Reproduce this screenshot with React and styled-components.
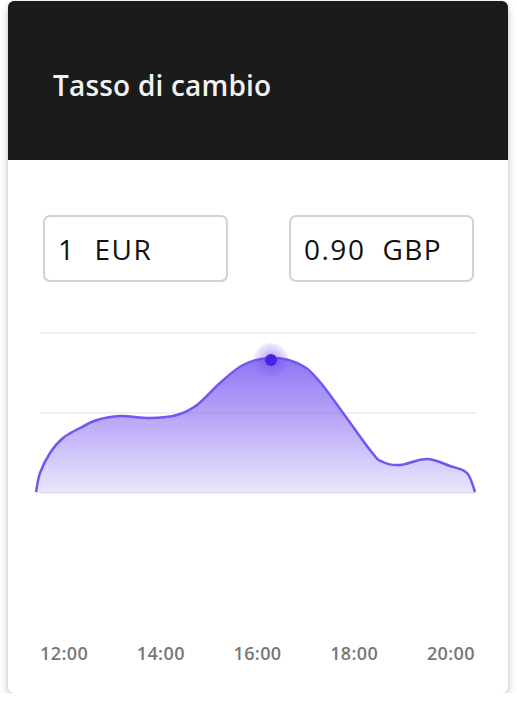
import styled, { createGlobalStyle } from "styled-components"

const GlobalStyle = createGlobalStyle`
  body {
    margin: 0;
    background: #ffffff;
    font-family: "Open Sans", "Liberation Sans", sans-serif;
  }
`

const points = [
  [6, 172], [10, 153], [20, 133], [33, 118], [50, 108], [67, 100], [90, 96],
  [120, 98], [147, 95], [167, 85], [190, 63], [213, 45], [240, 38], [267, 43],
  [290, 62], [340, 130], [353, 142], [370, 145], [397, 139], [420, 146],
  [437, 153], [445, 172],
]

// catmull-rom -> cubic bezier
function smoothPath(pts) {
  let d = `M${pts[0][0]},${pts[0][1]}`
  for (let i = 0; i < pts.length - 1; i++) {
    const p0 = pts[i - 1] || pts[i]
    const p1 = pts[i]
    const p2 = pts[i + 1]
    const p3 = pts[i + 2] || p2
    const c1x = p1[0] + (p2[0] - p0[0]) / 6
    const c1y = p1[1] + (p2[1] - p0[1]) / 6
    const c2x = p2[0] - (p3[0] - p1[0]) / 6
    const c2y = p2[1] - (p3[1] - p1[1]) / 6
    d += ` C${c1x.toFixed(1)},${c1y.toFixed(1)} ${c2x.toFixed(1)},${c2y.toFixed(1)} ${p2[0]},${p2[1]}`
  }
  return d
}

const times = ["12:00", "14:00", "16:00", "18:00", "20:00"]

export default function App() {
  const line = smoothPath(points)
  const area = `${line} L445,173 L6,173 Z`
  return (
    <>
      <GlobalStyle />
      <Card>
        <Header>
          <Title>Tasso di cambio</Title>
        </Header>
        <Body>
          <Inputs>
            <Field $gap={19}><span>1</span><span>EUR</span></Field>
            <Field $gap={17}><span>0.90</span><span>GBP</span></Field>
          </Inputs>
          <Chart width="450" height="190" viewBox="0 0 450 190">
            <defs>
              <linearGradient id="fill" x1="0" y1="0" x2="0" y2="1">
                <stop offset="0" stopColor="#7b5cf0" stopOpacity="0.85" />
                <stop offset="1" stopColor="#7b5cf0" stopOpacity="0.15" />
              </linearGradient>
              <radialGradient id="halo">
                <stop offset="0" stopColor="#6a45ea" stopOpacity="0.55" />
                <stop offset="1" stopColor="#6a45ea" stopOpacity="0.08" />
              </radialGradient>
            </defs>
            <line x1="10" y1="13" x2="447" y2="13" stroke="#efefef" strokeWidth="2" />
            <line x1="10" y1="93" x2="447" y2="93" stroke="#efefef" strokeWidth="2" />
            <line x1="10" y1="173" x2="447" y2="173" stroke="#efefef" strokeWidth="2" />
            <path d={area} fill="url(#fill)" />
            <path d={line} fill="none" stroke="#7356f2" strokeWidth="2.5" />
            <circle cx="241" cy="40" r="17" fill="url(#halo)" />
            <circle cx="241" cy="40" r="6" fill="#4a1fe6" />
          </Chart>
          <Times>
            {times.map(t => <Time key={t}>{t}</Time>)}
          </Times>
        </Body>
      </Card>
    </>
  )
}

const Card = styled.div`
  box-sizing: border-box;
  width: 500px;
  margin: 1px 0 0 8px;
  border-radius: 6px;
  overflow: hidden;
  background: #ffffff;
  box-shadow: 0px 5px 8px rgba(0, 0, 0, 0.22), 0 0 3px rgba(0, 0, 0, 0.08);
`

const Header = styled.div`
  height: 159px;
  background: #1b1b1b;
  display: flex;
  align-items: center;
  padding-left: 45px;
`

const Title = styled.h1`
  margin: 8px 0 0 0;
  color: #f2f2f2;
  font-size: 28px;
  font-weight: 600;
  letter-spacing: 0.2px;
`

const Body = styled.div`
  padding: 55px 0 0 0;
  height: 533px;
  box-sizing: border-box;
  display: flex;
  flex-direction: column;
`

const Inputs = styled.div`
  display: flex;
  justify-content: space-between;
  padding: 0 34px 0 35px;
`

const Field = styled.div`
  box-sizing: border-box;
  width: 185px;
  height: 67px;
  border: 2px solid #d2d2d2;
  border-radius: 7px;
  display: flex;
  align-items: center;
  gap: ${p => p.$gap}px;
  padding-left: 13px;
  font-size: 28px;
  letter-spacing: 1.5px;
  color: #111;
`

const Chart = styled.svg`
  display: block;
  margin: 38px 0 0 22px;
`

const Times = styled.div`
  display: flex;
  justify-content: space-between;
  padding: 0 33px 0 32px;
  margin-top: 131px;
`

const Time = styled.span`
  font-size: 18px;
  font-weight: 600;
  letter-spacing: 0.4px;
  color: #777777;
`
